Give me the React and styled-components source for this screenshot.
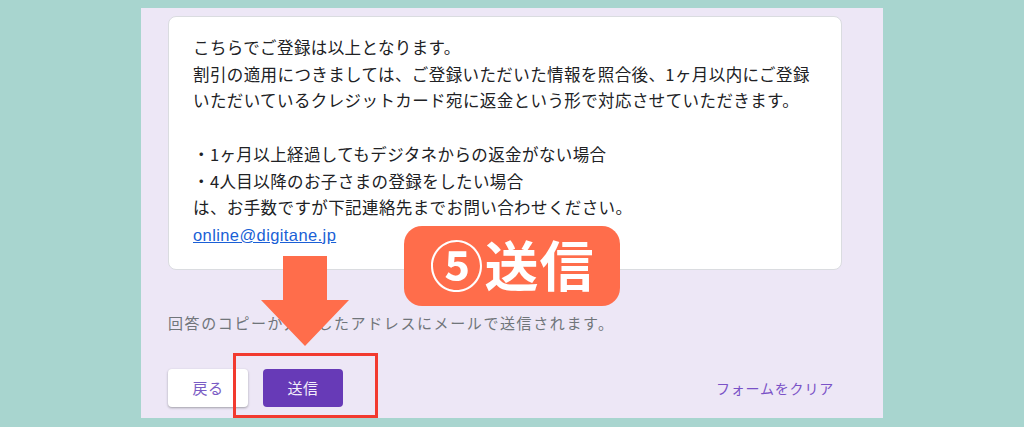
import styled, { createGlobalStyle } from "styled-components";

const GlobalStyle = createGlobalStyle`
  html, body {
    margin: 0;
    padding: 0;
    background: #a8d5cf;
    font-family: "Noto Sans CJK JP", "Noto Sans", sans-serif;
  }
`;

const Page = styled.div`
  width: 1024px;
  height: 427px;
  padding: 8px 0 0 141px;
  box-sizing: border-box;
  overflow: hidden;
`;

const Panel = styled.section`
  position: relative;
  width: 742px;
  height: 410px;
  box-sizing: border-box;
  padding: 8px 41px 0 27px;
  background: #ede7f6;
`;

const Card = styled.div`
  background: #fff;
  border: 1px solid #dadce0;
  border-radius: 8px;
  padding: 17px 20px 20px 24px;
  color: #202124;
  font-size: 16.5px;
  line-height: 26.7px;
  letter-spacing: 0.4px;
`;

const Line = styled.p`
  margin: 0;
  min-height: 26.7px;
  white-space: nowrap;
`;

const Mail = styled.a`
  color: #1a5fd6;
  text-decoration: underline;
  font-family: "Liberation Sans", Arial, sans-serif;
  letter-spacing: 0.4px;
`;

const Note = styled.p`
  margin: 43px 0 0;
  font-size: 15px;
  line-height: 20px;
  letter-spacing: 1.6px;
  color: #70757a;
  white-space: nowrap;
`;

const Actions = styled.div`
  display: flex;
  align-items: center;
  gap: 15px;
  margin-top: 36px;
  padding-right: 8px;
`;

const Button = styled.button`
  width: 80px;
  height: 38px;
  border: none;
  border-radius: 4px;
  font-family: inherit;
  font-size: 15px;
  letter-spacing: 0.5px;
  cursor: pointer;
  background: ${(p) => (p.$primary ? "#673ab7" : "#fff")};
  color: ${(p) => (p.$primary ? "#f3eefb" : "#7a5cc4")};
  box-shadow: ${(p) =>
    p.$primary ? "none" : "0 1px 2px rgba(60, 64, 67, 0.3), 0 1px 3px rgba(60, 64, 67, 0.15)"};
`;

const Clear = styled.span`
  margin-left: auto;
  font-size: 14px;
  letter-spacing: 0.8px;
  color: #7a52c7;
`;

const Highlight = styled.div`
  position: absolute;
  left: 92px;
  top: 345px;
  width: 145px;
  height: 65px;
  box-sizing: border-box;
  border: 3px solid #f23a2f;
  pointer-events: none;
`;

const Arrow = styled.svg`
  position: absolute;
  left: 120px;
  top: 248px;
  width: 88px;
  height: 90px;
`;

const Badge = styled.div`
  position: absolute;
  left: 263px;
  top: 218px;
  width: 216px;
  height: 80px;
  border-radius: 18px;
  background: #ff6d4b;
  color: #fff;
  display: flex;
  align-items: center;
  justify-content: center;
  font-size: 54px;
  font-weight: 700;
  letter-spacing: 1px;
  line-height: 1;
  padding-bottom: 4px;
  box-sizing: border-box;
`;

export default function App() {
  return (
    <>
      <GlobalStyle />
      <Page>
        <Panel>
          <Card>
            <Line>こちらでご登録は以上となります。</Line>
            <Line>割引の適用につきましては、ご登録いただいた情報を照合後、1ヶ月以内にご登録</Line>
            <Line>いただいているクレジットカード宛に返金という形で対応させていただきます。</Line>
            <Line />
            <Line>・1ヶ月以上経過してもデジタネからの返金がない場合</Line>
            <Line>・4人目以降のお子さまの登録をしたい場合</Line>
            <Line>は、お手数ですが下記連絡先までお問い合わせください。</Line>
            <Line>
              <Mail href="mailto:online@digitane.jp">online@digitane.jp</Mail>
            </Line>
          </Card>
          <Note>回答のコピーが入力したアドレスにメールで送信されます。</Note>
          <Actions>
            <Button>戻る</Button>
            <Button $primary>送信</Button>
            <Clear>フォームをクリア</Clear>
          </Actions>

          <Highlight />
          <Arrow viewBox="0 0 88 90">
            <path d="M22 0 H66 V44 H88 L44 90 L0 44 H22 Z" fill="#ff6d4b" />
          </Arrow>
          <Badge>⑤送信</Badge>
        </Panel>
      </Page>
    </>
  );
}
